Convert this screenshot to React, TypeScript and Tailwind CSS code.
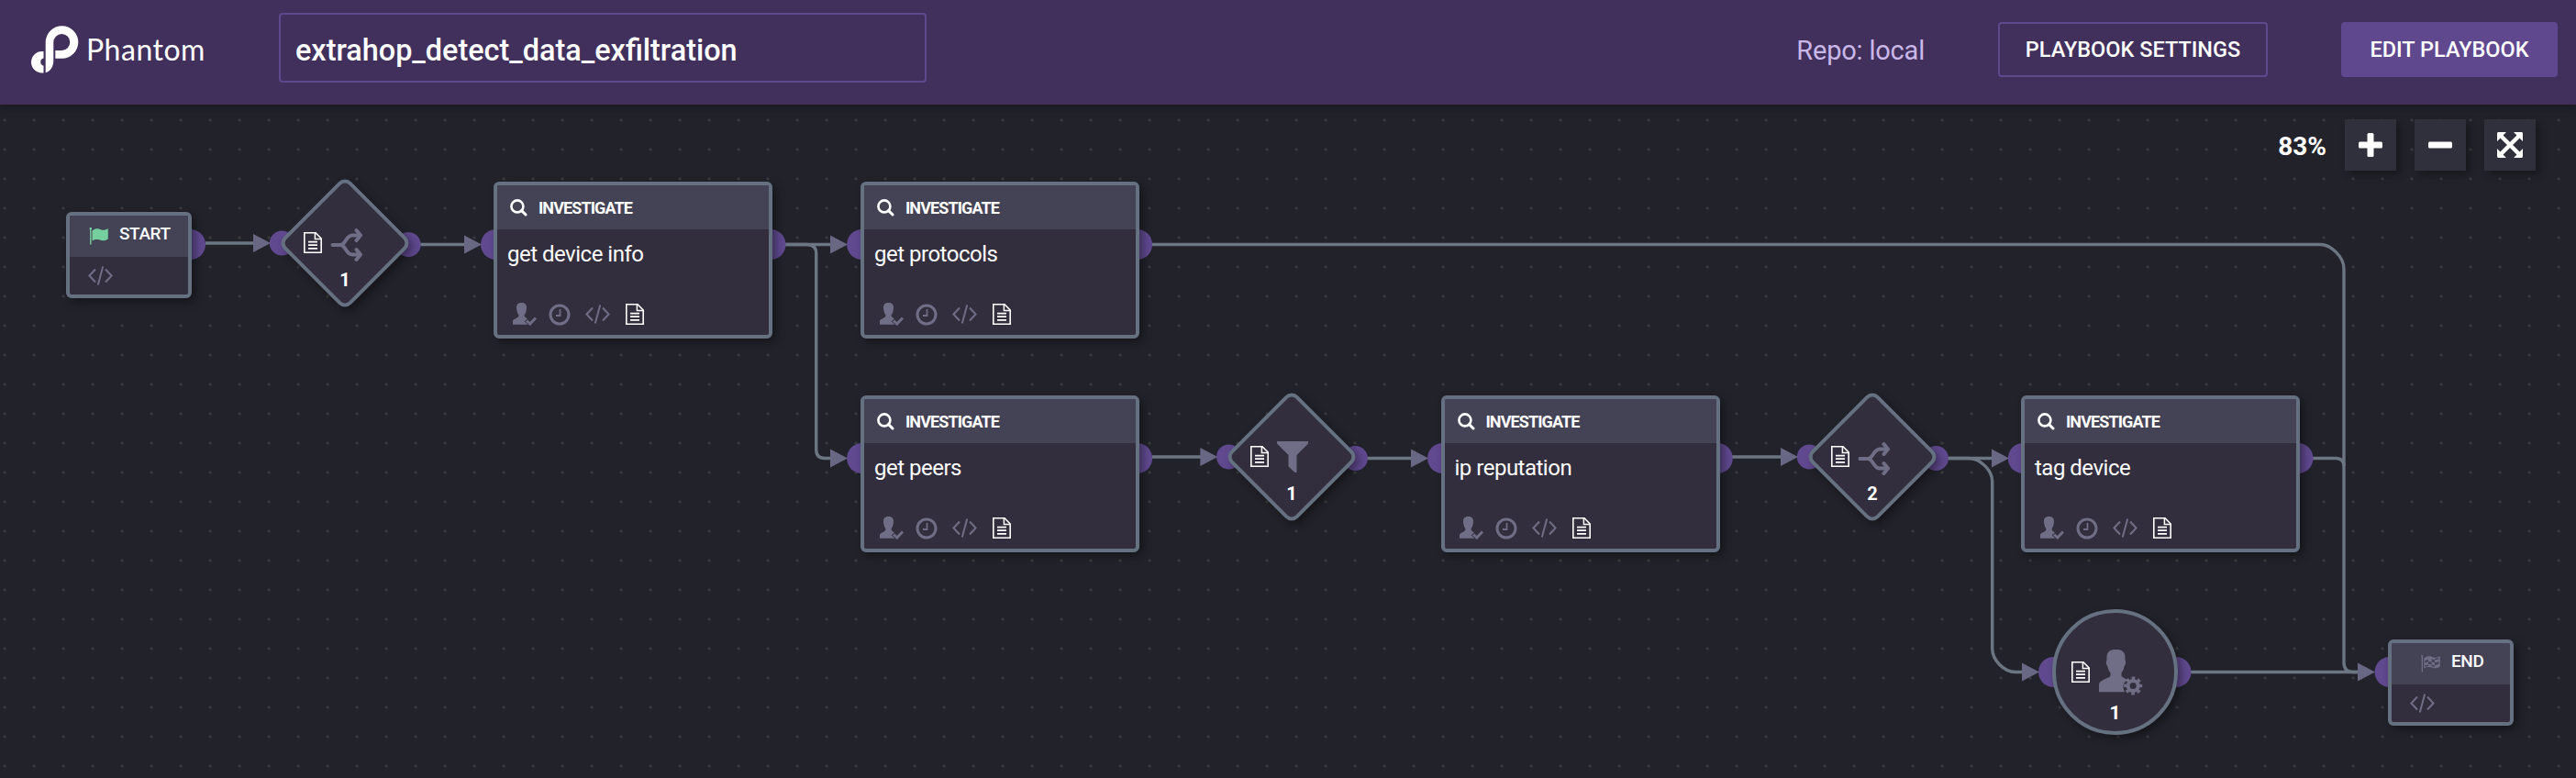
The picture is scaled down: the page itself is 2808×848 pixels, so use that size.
import React from "react";

type IconProps = { className?: string };

const DocIcon = ({ className = "" }: IconProps) => (
  <svg className={`shrink-0 ${className}`} width="20" height="23" viewBox="0 0 20 23" fill="none" stroke="#fff">
    <path d="M.8.8H13L19.2 7V22.2H.8Z" strokeWidth="1.6" />
    <path d="M12.4 1V7.6H19" strokeWidth="1.5" />
    <path d="M5 10.6H15M5 14.2H15M5 17.8H15" strokeWidth="1.8" />
  </svg>
);

const CodeIcon = ({ className = "" }: IconProps) => (
  <svg className={`shrink-0 ${className}`} width="27" height="21" viewBox="0 0 27 21" fill="none" stroke="#6f6e86" strokeWidth="2">
    <path d="M8 3.5 1.4 10.5 8 17.5M19 3.5 25.6 10.5 19 17.5M16.2.4 10.8 20.4" />
  </svg>
);

const UserCheckIcon = () => (
  <svg className="shrink-0" width="26" height="25" viewBox="0 0 26 25" fill="#6f6e86">
    <path d="M9.5 0C13 0 15 1.6 15 5c0 3.700-1 6.600-2.300 8v1.600c0 1.200 2 2 3.300 2.800l-3.300 2.800 3.600 3.600H0V20c0-2.300 6.300-3.200 6.300-5.400V13C5 11.600 4 8.700 4 5c0-3.400 2-5 5.500-5Z" />
    <path d="M15 19.500 18.800 23 25 16.500" fill="none" stroke="#6f6e86" strokeWidth="3" />
  </svg>
);

const ClockIcon = () => (
  <svg className="shrink-0" width="24" height="24" viewBox="0 0 24 24" fill="none" stroke="#6f6e86">
    <circle cx="12" cy="12" r="10" strokeWidth="3" />
    <path d="M12.500 6V13H8" strokeWidth="1.800" />
  </svg>
);

const SearchIcon = () => (
  <svg className="shrink-0" width="19" height="19" viewBox="0 0 19 19" fill="none" stroke="#fff" strokeWidth="2.600">
    <circle cx="7.900" cy="7.900" r="6.500" />
    <path d="M12.600 12.600 17 17" strokeWidth="3" strokeLinecap="round" />
  </svg>
);

const SplitIcon = () => (
  <svg width="36" height="38" viewBox="0 0 36 38" fill="none" stroke="#6f6e86" strokeWidth="4" strokeLinecap="round" strokeLinejoin="round">
    <path d="M2.500 19H11C17 19 17 8.500 24 8.500H32M11 19C17 19 17 29.500 24 29.500H32" strokeLinecap="butt" />
    <path d="M28.500 3 33 8.500 28.500 14M28.500 24 33 29.500 28.500 35" />
    <path d="M2.500 19H11" />
  </svg>
);

const FilterIcon = () => (
  <svg width="34" height="34" viewBox="0 0 34 34" fill="#6f6e86">
    <path d="M0 0H34V2.500L21.500 15V34H19.500L12.500 27.500V15L0 2.500Z" />
  </svg>
);

const UserGearIcon = () => (
  <svg width="48" height="50" viewBox="0 0 48 50">
    <path fill="#6f6e86" d="M18.500 0C25 0 28.500 2.500 28.500 8.500v3.500c1 .5.800 4.500-.8 6-.7 3.500-2 6-3.200 7.300v3c0 2 4.500 3.300 7 4.700-3.500 2-5 4-5 7 0 2.300.6 4.500 1.600 6.300H0V38c0-5.500 12.500-6.500 12.500-9.800v-3C11.200 24 10 21.500 9.300 18c-1.600-1.500-1.800-5.500-.8-6V8.500C8.500 2.500 12 0 18.500 0Z" />
    <circle cx="37.200" cy="39.500" r="5.600" fill="none" stroke="#6f6e86" strokeWidth="4" />
    <circle cx="37.200" cy="39.500" r="8.500" fill="none" stroke="#6f6e86" strokeWidth="3" strokeDasharray="3.600 3.076" strokeDashoffset="1.800" />
  </svg>
);

const FlagIcon = () => (
  <svg width="21" height="19" viewBox="0 0 21 19" fill="#76cf9f">
    <path d="M.5 1.200a1.300 1.300 0 0 1 2.600 0c0 .5-.2.900-.6 1.100V18.500H1.100V2.300C.7 2.100.5 1.700.5 1.200Z" />
    <path d="M3.500 3.500C8-.2 11 1.500 13.500 2.500c2.500.9 5 0 7.300-1.200V12.500c-2.300 1.300-4.500 2.500-7.300 1.500-3-1.100-6-1.900-10 .5Z" />
  </svg>
);

const CheckeredFlagIcon = () => (
  <svg width="21" height="19" viewBox="0 0 21 19">
    <path fill="#6f6e86" d="M0 1a1 1 0 0 1 2 0V18.500H.7V2C.3 1.800 0 1.500 0 1ZM3.300 3.500C8-.2 11 1.500 13.500 2.500c2.500.9 5 0 7.300-1.200V12.500c-2.300 1.300-4.500 2.500-7.300 1.500-3-1.100-6-1.900-10.200.5Z" />
    <path fill="#444255" d="M4.500 6 8 4.400V7.300L4.500 8.800ZM11.500 4.300 15 5.600V8.500L11.500 7.200ZM8 7.300 11.500 7.200V10.200L8 10.100ZM15 8.400 19.300 7V9.800L15 11.300ZM4.500 11.300 8 10.200V12L4.500 12.900ZM11.500 10.200 15 11.400V13L11.500 12ZM15 3.900 19.300 3V4.200L15 5.500Z" />
  </svg>
);

const PhantomMark = () => (
  <svg className="shrink-0" width="52" height="52" viewBox="0 0 52 52" fill="#fff">
    <path d="M15.700 51.300V18A17.800 17.800 0 1 1 33.500 35.800H26.300V27H33.500A9 9 0 1 0 24.300 18V38C24.300 44.500 21 49.800 15.700 51.300Z" />
    <path d="M13.500 28V35.500A4.200 4.200 0 0 0 13.500 43.700V51.500H11.750A11.750 11.750 0 0 1 11.750 28Z" />
  </svg>
);

const edges = [
  "M224 265H278",
  "M458 266.500H508",
  "M856 266.500H907",
  "M856 266.500H879Q889.700 266.500 889.700 276V490Q889.700 499.500 899 499.500H907",
  "M1256 266.500H2529C2541 266.500 2555 280 2555 293V722Q2555 732.500 2565 732.500H2572",
  "M1256 498H1310",
  "M1490 499.500H1540",
  "M1888 498H1943",
  "M2123 499.500H2173",
  "M2123 499.500H2146C2158 499.500 2171.700 512 2171.700 525V707C2171.700 719 2184 732.500 2197 732.500H2206",
  "M2520 499.500H2546Q2555 499.500 2555 508",
  "M2388 732.500H2572",
];

const arrows: [number, number][] = [
  [276, 265], [506, 266.5], [905, 266.5], [905, 499.5], [1308.3, 498], [1538, 499.5],
  [1941, 498], [2171, 499.5], [2204, 732.5], [2570, 732.5],
];

const ports: [number, number, number][] = [
  [207.5, 266.5, 16.5], [307.3, 265, 13.5], [445.2, 266.5, 13.5], [540.5, 266.5, 16.5],
  [840, 266.5, 16.5], [939.6, 266.5, 16.5], [1239.6, 266.5, 16.5], [939.6, 499.5, 16.5],
  [1239.6, 499.5, 16.5], [1339.5, 498, 13.5], [1477.4, 499.5, 13.5], [1572.5, 499.5, 16.5],
  [1872.3, 499.5, 16.5], [1972.3, 498, 13.5], [2110.4, 499.5, 13.5], [2205.3, 499.5, 16.5],
  [2505, 499.5, 16.5], [2238.5, 732.5, 16.5], [2372, 732.5, 16.5], [2605, 732.5, 16.5],
];

const Connections = () => (
  <svg className="absolute left-0 top-0" width="2808" height="734" viewBox="0 114 2808 734">
    <g fill="none" stroke="#6c7683" strokeWidth="3.400">
      {edges.map((d) => <path key={d} d={d} />)}
    </g>
    <g fill="#60498f">
      {ports.map(([x, y, r]) => <circle key={`${x}-${y}`} cx={x} cy={y} r={r} />)}
    </g>
    <g fill="#686884">
      {arrows.map(([x, y]) => <path key={`${x}-${y}`} d={`M${x} ${y - 10}L${x + 19} ${y}L${x} ${y + 10}Z`} />)}
    </g>
  </svg>
);

const frame = "absolute flex flex-col overflow-hidden rounded-[6px] border-4 border-[#657080] bg-[#332e3d] shadow-[4px_4px_10px_rgba(0,0,0,0.4)]";

const ActionNode = ({ place, label }: { place: string; label: string }) => (
  <div className={`${frame} h-[171px] w-[304px] ${place}`}>
    <div className="flex h-12 shrink-0 items-center gap-3 bg-[#444255] pl-[14px] text-[18px] font-bold text-white">
      <SearchIcon />
      <span className="tracking-[-0.9px]">INVESTIGATE</span>
    </div>
    <div className="pl-[11px] pt-[10px] text-[24px] leading-[34px] tracking-[-0.5px] text-white">{label}</div>
    <div className="mt-auto flex items-center pb-[10px] pl-[16.500px]">
      <UserCheckIcon />
      <span className="ml-[13px] flex"><ClockIcon /></span>
      <CodeIcon className="ml-4" />
      <DocIcon className="ml-[17px]" />
    </div>
  </div>
);

const DiamondNode = ({ place, icon, count }: { place: string; icon: React.ReactNode; count: string }) => (
  <div className={`absolute size-[104px] ${place}`}>
    <div className="size-full rotate-45 rounded-[10px] border-4 border-[#657080] bg-[#332e3d] shadow-[6px_0px_10px_rgba(0,0,0,0.4)]" />
    <div className="absolute left-[6.500px] top-[40px]"><DocIcon /></div>
    <div className="absolute left-[36px] top-[35px]">{icon}</div>
    <div className="absolute inset-x-0 top-[80px] text-center text-[20px] font-bold leading-6 text-white">{count}</div>
  </div>
);

const TerminalNode = ({ place, icon, label, inset }: { place: string; icon: React.ReactNode; label: string; inset: string }) => (
  <div className={`${frame} h-[94px] w-[137px] ${place}`}>
    <div className={`flex h-[45px] shrink-0 items-center gap-3 bg-[#444255] pb-1 text-[19px] font-medium text-white ${inset}`}>
      <span className="mt-1">{icon}</span>
      <span className="tracking-[-0.4px]">{label}</span>
    </div>
    <div className="pl-5 pt-[10px]"><CodeIcon /></div>
  </div>
);

const zoomButton = "flex size-14 items-center justify-center bg-[#302f3c] shadow-[4px_4px_8px_rgba(0,0,0,0.35)]";

export default function App() {
  return (
    <div className="flex h-[848px] w-[2808px] flex-col overflow-hidden bg-[#22222b] font-['Roboto','Liberation_Sans',sans-serif]">
      <header className="relative z-10 flex h-[114px] shrink-0 items-start bg-[#412f5c] pl-[34px] pr-5 text-white shadow-[0_2px_10px_rgba(0,0,0,0.35)]">
        <div className="flex w-[270px] items-center gap-2 pt-7">
          <PhantomMark />
          <span className="font-['Lato',sans-serif] text-[32px] leading-[52px] tracking-[0.5px]">Phantom</span>
        </div>
        <div className="mt-[14px] flex h-[76px] w-[706px] items-center rounded-[4px] border-2 border-[#60488f] pl-4 pt-[5px] text-[32.400px] font-medium leading-[38px]">
          extrahop_detect_data_exfiltration
        </div>
        <div className="ml-auto mt-6 flex h-[60px] items-center">
          <span className="mr-20 pt-[3px] text-[29px] tracking-[-0.200px] text-[#c9b8e8]">Repo: local</span>
          <button className="mr-20 h-[60px] w-[294px] rounded-[4px] border-2 border-[#60488f] pt-px text-[23.500px] font-medium">PLAYBOOK SETTINGS</button>
          <button className="h-[60px] w-[236px] rounded-[4px] bg-[#60488f] pt-px text-[23.500px] font-medium">EDIT PLAYBOOK</button>
        </div>
      </header>

      <main className="relative h-[734px] bg-[radial-gradient(circle,#3a3b3d_1px,transparent_2px)] bg-[length:32px_32px] bg-[position:-11px_1px]">
        <Connections />

        <TerminalNode place="left-[72px] top-[117px]" icon={<FlagIcon />} label="START" inset="pl-[21px]" />
        <DiamondNode place="left-[324px] top-[98.500px]" icon={<SplitIcon />} count="1" />
        <ActionNode place="left-[538px] top-[84px]" label="get device info" />
        <ActionNode place="left-[938px] top-[84px]" label="get protocols" />
        <ActionNode place="left-[938px] top-[317px]" label="get peers" />
        <DiamondNode place="left-[1356px] top-[332px]" icon={<FilterIcon />} count="1" />
        <ActionNode place="left-[1570.500px] top-[317px]" label="ip reputation" />
        <DiamondNode place="left-[1989px] top-[332px]" icon={<SplitIcon />} count="2" />
        <ActionNode place="left-[2203px] top-[317px]" label="tag device" />
        <div className="absolute left-[2237px] top-[550px] size-[137px] rounded-full border-4 border-[#657080] bg-[#332e3d] shadow-[4px_4px_10px_rgba(0,0,0,0.4)]">
          <div className="absolute left-[17px] top-[53px]"><DocIcon /></div>
          <div className="absolute left-[47px] top-[40px]"><UserGearIcon /></div>
          <div className="absolute inset-x-0 top-[97px] text-center text-[21px] font-bold leading-6 text-white">1</div>
        </div>
        <TerminalNode place="left-[2603px] top-[583px]" icon={<CheckeredFlagIcon />} label="END" inset="pl-8" />

        <div className="relative flex items-center justify-end gap-5 pr-11 pt-4 text-white">
          <span className="pt-1 text-[28px] font-bold leading-8">83%</span>
          <button className={zoomButton} aria-label="Zoom in">
            <svg width="26" height="26" viewBox="0 0 26 26" fill="#fff">
              <rect x="0" y="9.500" width="26" height="7" rx="1.500" />
              <rect x="9.500" y="0" width="7" height="26" rx="1.500" />
            </svg>
          </button>
          <button className={zoomButton} aria-label="Zoom out">
            <svg width="26" height="26" viewBox="0 0 26 26" fill="#fff">
              <rect x="0" y="9.500" width="26" height="7" rx="1.500" />
            </svg>
          </button>
          <button className={zoomButton} aria-label="Fit to screen">
            <svg width="28" height="28" viewBox="0 0 28 28" fill="#fff">
              <path d="M4 4 24 24M24 4 4 24" stroke="#fff" strokeWidth="4.500" />
              <path d="M1 0H10L0 10V1ZM18 0H27L28 1V10ZM0 18V27L1 28H10ZM28 18V27L27 28H18Z" />
            </svg>
          </button>
        </div>
      </main>
    </div>
  );
}
